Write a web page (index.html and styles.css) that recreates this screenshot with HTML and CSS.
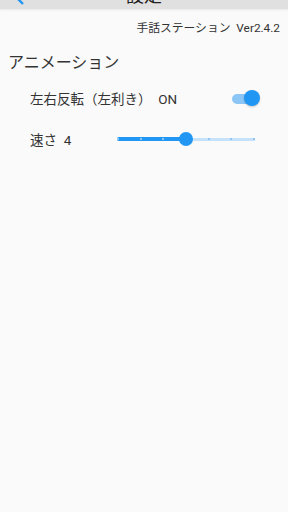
FILE: index.html
```html
<!DOCTYPE html>
<html lang="ja">
<head>
<meta charset="utf-8">
<link rel="stylesheet" href="styles.css">
</head>
<body>
<div class="appbar">
  <svg class="back" width="12" height="20" viewBox="0 0 12 20"><path d="M10 2 L2 10 L10 18" fill="none" stroke="#2196f3" stroke-width="2.4"/></svg>
  <div class="title">設定</div>
</div>
<div class="version">手話ステーション&nbsp;&nbsp;Ver2.4.2</div>
<div class="section">アニメーション</div>
<div class="row toggle-row">
  <span class="label">左右反転（左利き）&nbsp;&nbsp;ON</span>
  <div class="switch"><div class="track"></div><div class="thumb"></div></div>
</div>
<div class="row slider-row">
  <span class="label speed">速さ&nbsp;&nbsp;4</span>
  <div class="slider">
    <div class="rail"></div>
    <div class="active" style="width:50%"></div>
    <div class="ticks"><i class="on"></i><i class="on"></i><i class="on"></i><i></i><i></i><i></i><i></i></div>
    <div class="knob" style="left:50%"></div>
  </div>
</div>
</body>
</html>
```
FILE: styles.css
```css
html, body { margin: 0; padding: 0; }
body {
  width: 288px; height: 512px; background: #fafafa; overflow: hidden;
  font-family: Roboto, "Noto Sans CJK JP", sans-serif; color: #333;
}
.appbar {
  height: 9px; background: #e0e0e0; position: relative; overflow: hidden;
  display: flex; justify-content: center; align-items: flex-end;
  box-shadow: 0 1px 2px rgba(0,0,0,0.08);
}
.back { position: absolute; left: 13px; top: -14px; }
.title { font-size: 18px; line-height: 18px; margin-bottom: 4px; color: #222; }
.version {
  text-align: right; font-size: 11.8px; padding: 10px 8px 0 0; line-height: 18px; color: #333;
}
.section { font-size: 16px; line-height: 20px; padding: 16px 0 0 8px; color: #333; }
.row { display: flex; align-items: center; padding-left: 30px; padding-right: 28px; }
.label { font-size: 13.5px; color: #333; }
.toggle-row { height: 24px; margin-top: 13px; justify-content: space-between; }
.switch { position: relative; width: 28px; height: 18px; }
.track { position: absolute; left: 0; top: 5px; width: 26px; height: 10px; border-radius: 5px; background: #8cc6f7; }
.thumb { position: absolute; left: 12px; top: 1px; width: 16px; height: 16px; border-radius: 50%; background: #2196f3; box-shadow: 0 1px 2px rgba(0,0,0,0.2); }
.slider-row { height: 24px; margin-top: 17px; }
.speed { width: 87px; flex: none; }
.slider { position: relative; height: 16px; width: 138px; flex: none; }
.rail { position: absolute; left: 0; right: 0; top: 6.5px; height: 3px; background: #c6e2fb; }
.active { position: absolute; left: 0; top: 6px; height: 4px; background: #2196f3; border-radius: 2px; }
.ticks { position: absolute; left: 0; right: 0; top: 7px; height: 2px; display: flex; justify-content: space-between; }
.ticks i { width: 2px; height: 2px; background: rgba(33,150,243,0.35); }
.ticks i.on { background: rgba(255,255,255,0.45); }
.knob { position: absolute; top: 1px; width: 14px; height: 14px; margin-left: -7px; border-radius: 50%; background: #2196f3; }
```
